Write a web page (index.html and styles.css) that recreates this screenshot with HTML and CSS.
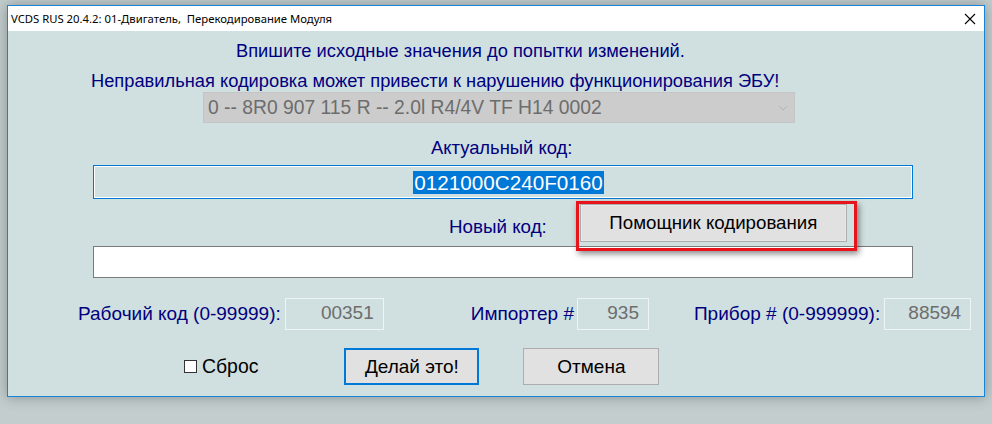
FILE: index.html
```
<!DOCTYPE html>
<html lang="ru">
<head>
	<meta charset="UTF-8">
	<title>VCDS RUS 20.4.2</title>
	<link rel="stylesheet" href="styles.css">
</head>
<body>
	<div class="window">
		<div class="titlebar">
			<span class="title">VCDS RUS 20.4.2: 01-Двигатель,  Перекодирование Модуля</span>
			<svg class="close" width="12" height="12" viewBox="0 0 12 12">
				<path d="M1 1L11 11M11 1L1 11" stroke="#000" stroke-width="1.1" fill="none"/>
			</svg>
		</div>
		<div class="client">
			<div class="msg first">Впишите исходные значения до попытки изменений.</div>
			<div class="msg second">Неправильная кодировка может привести к нарушению функционирования ЭБУ!</div>
			<div class="select">
				<span>0 -- 8R0 907 115 R -- 2.0l R4/4V TF H14 0002</span>
				<svg width="10" height="6" viewBox="0 0 10 6">
					<path d="M1 1L5 5L9 1" stroke="#b4b4b4" stroke-width="1" fill="none"/>
				</svg>
			</div>
			<div class="msg label-actual">Актуальный код:</div>
			<div class="field actual"><span class="sel">0121000C240F0160</span></div>
			<div class="newrow">
				<span class="msg newlabel">Новый код:</span>
				<div class="helper">
					<button class="btn helper-btn">Помощник кодирования</button>
					<div class="mark"></div>
				</div>
			</div>
			<div class="field newcode"></div>
			<div class="params">
				<span class="msg">Рабочий код (0-99999):</span>
				<span class="num w1">00351</span>
				<span class="msg imp">Импортер #</span>
				<span class="num w2">935</span>
				<span class="msg dev">Прибор # (0-999999):</span>
				<span class="num w3">88594</span>
			</div>
			<div class="actions">
				<label class="check"><span class="box"></span>Сброс</label>
				<button class="btn btn-do">Делай это!</button>
				<button class="btn btn-cancel">Отмена</button>
			</div>
		</div>
	</div>
</body>
</html>
```
FILE: styles.css
```
*{margin:0;padding:0;box-sizing:border-box;}
body{
	background:#c3cdcd;
	width:992px;
	height:424px;
	overflow:hidden;
	font-family:"Liberation Sans",Arial,sans-serif;
}
.window{
	margin:5px 0 0 7px;
	width:978px;
	height:392px;
	border:1px solid #1883d7;
	background:#d0dfdf;
	box-shadow:0 0 12px rgba(60,70,70,.45);
	display:flex;
	flex-direction:column;
}
.titlebar{
	height:25px;
	background:#fff;
	display:flex;
	align-items:center;
	padding:0 8px 0 3px;
}
.title{
	font-family:"Noto Sans",sans-serif;
	font-size:11.3px;
	white-space:pre;
	color:#000;
	flex:1;
}
.close{display:block;}
.client{
	flex:1;
	display:flex;
	flex-direction:column;
	align-items:flex-start;
}
.msg{
	font-size:18.3px;
	line-height:22px;
	color:#00007f;
	white-space:nowrap;
}
.first{margin:9px 0 0 228px;}
.second{margin:8px 0 0 83px;}
.select{
	width:592px;
	height:31px;
	background:#cccccc;
	border:1px solid #c4c4c4;
	display:flex;
	align-items:center;
	justify-content:space-between;
	padding:0 6px 0 4px;
	font-size:19.3px;
	color:#6d6d6d;
	margin-left:195px;
}
.select svg{display:block;}
.label-actual{
	margin:14px 0 0 423px;
	font-size:18.4px;
}
.field{
	width:820px;
	height:34px;
	margin-left:85px;
}
.actual{
	margin-top:6px;
	border:1px solid #0078d7;
	box-shadow:inset 0 0 0 1px #fff;
	display:flex;
	align-items:center;
	justify-content:center;
	padding-left:11px;
}
.sel{
	background:#0078d7;
	color:#fff;
	font-size:20.7px;
	line-height:23px;
	padding:0 1px;
}
.newrow{
	display:flex;
	align-items:center;
	margin-top:5px;
	padding-left:441px;
}
.newlabel{
	margin-top:8px;
	font-size:18.8px;
}
.helper{
	position:relative;
	margin-left:33px;
}
.btn{
	font-family:"Liberation Sans",Arial,sans-serif;
	font-size:19px;
	color:#000;
	background:#e1e1e1;
	border:1px solid #adadad;
}
.helper-btn{
	width:267px;
	height:38px;
	font-size:18.7px;
	box-shadow:inset 0 0 0 1px #e8e8e8;
}
.mark{
	position:absolute;
	left:-4px;
	top:-3px;
	right:-10px;
	bottom:-9px;
	border:3px solid #e8141b;
	box-shadow:2px 3px 6px rgba(0,0,0,.45);
}
.newcode{
	margin-top:4px;
	height:32px;
	background:#fff;
	border:1px solid #7a7a7a;
}
.params{
	display:flex;
	align-items:center;
	margin-top:20px;
	padding-left:70px;
}
.params .msg{font-size:19px;}
.num{
	height:32px;
	border:1px solid #eef3f3;
	font-size:19px;
	color:#6d6d6d;
	text-align:right;
	padding:3px 9px 0 0;
	margin-left:4px;
}
.w1{width:99px;}
.w2{width:72px;margin-left:3px;}
.w3{width:87px;}
.params .imp{margin-left:87px;}
.params .dev{margin-left:45px;}
.actions{
	display:flex;
	align-items:center;
	margin-top:18px;
	padding-left:176px;
}
.check{
	display:flex;
	align-items:center;
	font-size:19.4px;
	color:#000;
}
.box{
	width:13px;
	height:13px;
	border:1px solid #333;
	background:#fff;
	margin-right:5px;
}
.btn-do{
	width:135px;
	height:37px;
	border:2px solid #0078d7;
	margin-left:86px;
}
.btn-cancel{
	width:136px;
	height:37px;
	margin-left:44px;
}
```
